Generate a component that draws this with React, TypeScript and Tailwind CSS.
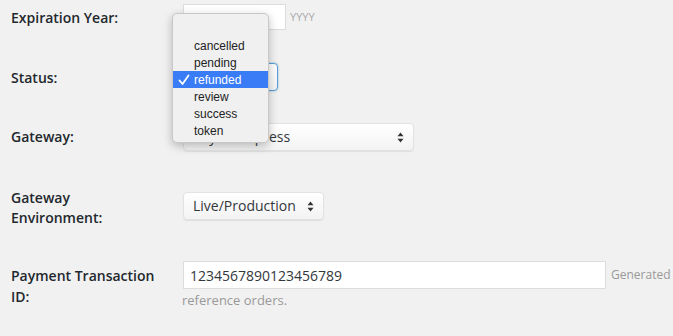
import React from "react";

const label = "shrink-0 font-['Open_Sans',sans-serif] text-[14px] font-semibold text-[#23282d] leading-[20px]";

function Arrows() {
  return (
    <svg width="7" height="11" viewBox="0 0 7 11" className="shrink-0">
      <path d="M3.5 0.5 L6.5 4.2 H0.5 Z" fill="#333" />
      <path d="M3.5 10.5 L6.5 6.8 H0.5 Z" fill="#333" />
    </svg>
  );
}

function Select({ text, width, focused }: { text: string; width: string; focused?: boolean }) {
  return (
    <div
      className={`${width} h-[28px] flex items-center justify-between pl-[9px] pr-[9px] rounded-[4px] bg-gradient-to-b from-white to-[#f3f3f3] ${
        focused ? "border border-[#5b9dd9] shadow-[0_0_2px_rgba(30,140,190,0.6)]" : "border border-[#e2e2e2] shadow-[0_1px_1px_rgba(0,0,0,0.08)]"
      }`}
    >
      <span className="font-['Open_Sans',sans-serif] text-[14px] text-[#32373c] leading-none">{text}</span>
      <Arrows />
    </div>
  );
}

const options = ["cancelled", "pending", "refunded", "review", "success", "token"];

export default function App() {
  return (
    <div className="relative w-[673px] h-[336px] bg-[#f1f1f1] overflow-hidden">
      {/* Expiration Year */}
      <div className="flex h-[59px]">
        <div className={`w-[183px] pl-[11px] pt-[8px] ${label}`}>Expiration Year:</div>
        <div className="pt-[4px] flex items-start gap-[4px]">
          <div className="w-[103px] h-[26px] bg-white border border-[#dddddd]" />
          <span className="font-['Open_Sans',sans-serif] text-[11px] text-[#aaaaaa] leading-[26px]">YYYY</span>
        </div>
      </div>

      {/* Status */}
      <div className="flex h-[60px]">
        <div className={`w-[183px] pl-[11px] pt-[9px] ${label}`}>Status:</div>
        <div className="pt-[4px]">
          <Select text="refunded" width="w-[95px]" focused />
        </div>
      </div>

      {/* Gateway */}
      <div className="flex h-[69px]">
        <div className={`w-[183px] pl-[11px] pt-[8px] ${label}`}>Gateway:</div>
        <div className="pt-[4px]">
          <Select text="PayPal Express" width="w-[231px]" />
        </div>
      </div>

      {/* Gateway Environment */}
      <div className="flex h-[69px]">
        <div className={`w-[183px] pl-[11px] pt-0 ${label} leading-[19px]`}>
          Gateway
          <br />
          Environment:
        </div>
        <div className="pt-[4px]">
          <Select text="Live/Production" width="w-[141px]" />
        </div>
      </div>

      {/* Payment Transaction ID */}
      <div className="flex">
        <div className={`w-[183px] pl-[11px] pt-[8px] ${label} leading-[21px]`}>
          Payment Transaction
          <br />
          ID:
        </div>
        <div className="pt-[4px] shrink-0">
          <div className="flex items-center gap-[5px]">
            <div className="w-[423px] h-[28px] bg-white border border-[#dddddd] flex items-center pl-[6px] font-['Open_Sans',sans-serif] text-[14px] text-[#32373c]">
              1234567890123456789
            </div>
            <span className="font-['Open_Sans',sans-serif] text-[12px] text-[#999999] whitespace-nowrap">Generated</span>
          </div>
          <div className="-ml-[1px] mt-[1px] font-['Open_Sans',sans-serif] text-[13px] text-[#999999] leading-[20px]">
            reference orders.
          </div>
        </div>
      </div>

      {/* open select menu */}
      <div className="absolute left-[172px] top-[13px] w-[97px] h-[130px] pt-[23px] rounded-[5px] bg-[#f0f0f0] border border-[#c8c8c8] shadow-[0_3px_10px_rgba(0,0,0,0.25)]">
        {options.map((o) => (
          <div
            key={o}
            className={`h-[17px] flex items-center font-['Liberation_Sans',Arial,sans-serif] text-[12px] leading-none ${
              o === "refunded" ? "bg-[#3a7cf6] text-white" : "text-[#222]"
            }`}
          >
            <span className="w-[21px] flex justify-center">
              {o === "refunded" && (
                <svg width="12" height="12" viewBox="0 0 12 12">
                  <path d="M1.5 6.5 L4.5 10 L10.5 1.5" stroke="white" strokeWidth="1.8" fill="none" strokeLinecap="round" strokeLinejoin="round" />
                </svg>
              )}
            </span>
            {o}
          </div>
        ))}
      </div>
    </div>
  );
}
